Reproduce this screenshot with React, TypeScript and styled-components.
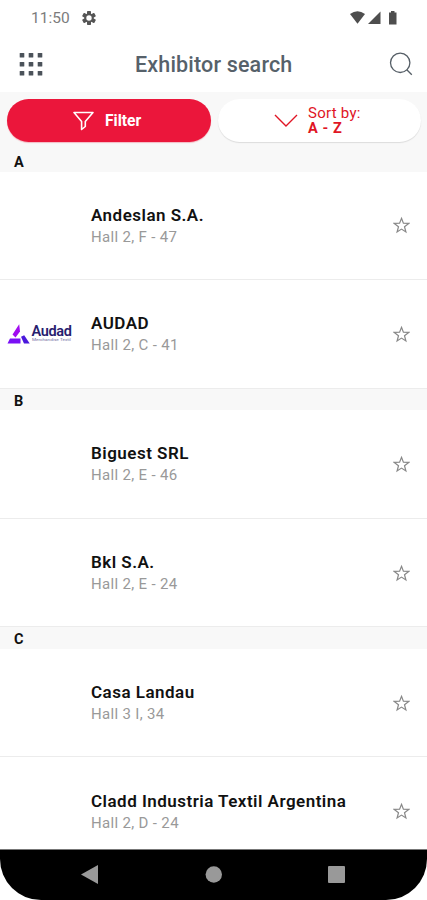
import React from "react";
import styled, { createGlobalStyle } from "styled-components";

const GlobalStyle = createGlobalStyle`
  * { box-sizing: border-box; }
  body { margin: 0; background: #fff; font-family: Roboto, "Liberation Sans", sans-serif; }
`;

const Screen = styled.div`
  width: 427px;
  height: 900px;
  display: flex;
  flex-direction: column;
  background: #fff;
  overflow: hidden;
`;

const StatusBar = styled.div`
  height: 36px;
  flex: none;
  display: flex;
  align-items: center;
  padding: 0 28px 0 31px;
`;

const Clock = styled.span`
  width: 51px;
  font-size: 15.5px;
  line-height: 18px;
  color: #7c7c7c;
`;

const StatusIcons = styled.div`
  margin-left: auto;
  display: flex;
`;

const AppBar = styled.header`
  height: 56px;
  flex: none;
  display: flex;
  align-items: center;
  padding: 0 14px 0 19px;
`;

const Title = styled.h1`
  flex: 1;
  margin: 2px 0 0 92px;
  font-size: 21.5px;
  font-weight: 500;
  line-height: 28px;
  letter-spacing: 0.17px;
  color: #56616a;
  white-space: nowrap;
`;

const Controls = styled.div`
  height: 61px;
  flex: none;
  display: flex;
  gap: 7px;
  padding: 6.5px 6px 11.5px 7px;
  background: #f8f8f8;
`;

const Pill = styled.button<{ $primary?: boolean }>`
  width: ${(p) => (p.$primary ? 204 : 203)}px;
  height: 43px;
  border: 0;
  border-radius: 22px;
  padding: 1px 0 0 ${(p) => (p.$primary ? 66 : 56)}px;
  display: flex;
  align-items: center;
  gap: ${(p) => (p.$primary ? 11 : 10)}px;
  font-family: inherit;
  text-align: left;
  color: ${(p) => (p.$primary ? "#fff" : "#e01525")};
  background: ${(p) => (p.$primary ? "#eb163b" : "#fff")};
  box-shadow: 0 1px 1px ${(p) => (p.$primary ? "#f3b9c2" : "#dcdcdc")};
`;

const FilterLabel = styled.span`
  font-size: 15.6px;
  line-height: 18px;
  font-weight: 700;
`;

const SortLabel = styled.span`
  display: flex;
  flex-direction: column;
`;

const SortCaption = styled.span`
  font-size: 15px;
  line-height: 15px;
  letter-spacing: 0.25px;
`;

const SortValue = styled.b`
  font-size: 14.5px;
  line-height: 15px;
  letter-spacing: 0.6px;
`;

const List = styled.main`
  flex: 1;
  min-height: 0;
  overflow: hidden;
`;

const SectionHead = styled.h2<{ $first?: boolean }>`
  margin: 0;
  height: ${(p) => (p.$first ? 18.5 : 21.5)}px;
  padding: ${(p) => (p.$first ? 1 : 4)}px 14px 0;
  font-size: 14.5px;
  line-height: 18px;
  font-weight: 700;
  color: #111;
  background: #f8f8f8;
`;

const Row = styled.article`
  height: 108.6px;
  display: flex;
  align-items: center;
  border-bottom: 1.5px solid #ececec;
  padding: 0 17px 0 7px;
`;

const LogoSlot = styled.div`
  width: 84px;
  height: 26px;
`;

const Details = styled.div`
  flex: 1;
  display: flex;
  flex-direction: column;
  padding-top: 2px;
  white-space: nowrap;
`;

const Name = styled.span`
  font-size: 17px;
  line-height: 20px;
  margin-bottom: 2px;
  font-weight: 600;
  letter-spacing: 0.48px;
  color: #111;
`;

const Place = styled.span`
  font-size: 15px;
  line-height: 21px;
  letter-spacing: 0.33px;
  color: #999;
`;

const NavBar = styled.nav`
  height: 51px;
  flex: none;
  display: flex;
  align-items: center;
  justify-content: space-between;
  padding: 0 82px 0 81px;
  background: #000;
  border-top: 1px solid #777;
  border-radius: 0 0 41px 41px;
`;

const GearIcon = () => (
  <svg width="14" height="14" viewBox="0 0 14 14">
    <g fill="#555">
      {[0, 60, 120].map((a) => (
        <rect key={a} x="5" y="0" width="4" height="14" rx=".7" transform={`rotate(${a} 7 7)`} />
      ))}
    </g>
    <circle cx="7" cy="7" r="3.7" fill="#fff" stroke="#555" strokeWidth="2" />
  </svg>
);

const SignalIcons = () => (
  <svg width="49" height="16" viewBox="0 0 49 16" fill="#4e4e4e">
    <path d="M0 4Q7.5-1.5 15 4L7.5 13.8Z" />
    <path d="M30.5 1.5V14H18Z" />
    <path d="M39 2.5h2V1h3.5v1.5h2v12H39z" />
  </svg>
);

const GridIcon = () => (
  <svg width="24" height="24" viewBox="0 0 24 24" fill="#4b525a">
    {[1, 10, 19].map((y) =>
      [0.7, 9.7, 18.7].map((x) => <rect key={`${x}-${y}`} x={x} y={y} width="4.6" height="4.6" rx=".6" />)
    )}
  </svg>
);

const SearchIcon = () => (
  <svg width="24" height="24" viewBox="0 0 24 24" fill="none" stroke="#555e66" strokeWidth="1.3">
    <circle cx="11.2" cy="10.8" r="9.7" />
    <path d="m17.8 17.8 5 5" />
  </svg>
);

const FunnelIcon = () => (
  <svg width="21" height="20" viewBox="0 0 21 20" fill="none" stroke="#fff" strokeWidth="1.6" strokeLinejoin="round">
    <path d="M1 1.5H20L12.3 10.5V15.5L8.6 18.5V10.5Z" />
  </svg>
);

const ChevronIcon = () => (
  <svg width="24" height="14" viewBox="0 0 24 14" fill="none" stroke="#e01525" strokeWidth="1.4">
    <path d="m1 1 11 11L23 1" />
  </svg>
);

const StarIcon = () => (
  <svg width="17" height="18" viewBox="0 0 17 18" fill="none" stroke="#888" strokeWidth="1.2">
    <path d="m8.5 2.3 1.9 4.8 5.3.3-4.2 3.3 1.4 5.3-4.4-2.9L4.1 16l1.4-5.3-4.2-3.3 5.3-.3z" />
  </svg>
);

const AudadLogo = () => (
  <svg width="66" height="26" viewBox="0 0 66 26">
    <path d="M12.2 3.2 13 10.5 8.5 16.5 5.5 13.5Z" fill="#a10cf0" />
    <path d="M3 17.5h10.5v5H.5Z" fill="#7a10f5" />
    <path d="m14 15.8 3.2-1.5 5.5 8.2H17Z" fill="#4a18dc" />
    <text x="24.5" y="15" fontFamily="Roboto, sans-serif" fontSize="14.5" fontWeight="600" fill="#27206e" textLength="40.5" lengthAdjust="spacing">Audad</text>
    <text x="25" y="20.2" fontFamily="Roboto, sans-serif" fontSize="3.6" fill="#7771a5" textLength="39" lengthAdjust="spacingAndGlyphs">Merchandise Textil</text>
  </svg>
);

interface Exhibitor {
  name: string;
  place: string;
  logo?: boolean;
}

const sections: { letter: string; items: Exhibitor[] }[] = [
  { letter: "A", items: [{ name: "Andeslan S.A.", place: "Hall 2, F - 47" }, { name: "AUDAD", place: "Hall 2, C - 41", logo: true }] },
  { letter: "B", items: [{ name: "Biguest SRL", place: "Hall 2, E - 46" }, { name: "Bkl S.A.", place: "Hall 2, E - 24" }] },
  { letter: "C", items: [{ name: "Casa Landau", place: "Hall 3 I, 34" }, { name: "Cladd Industria Textil Argentina", place: "Hall 2, D - 24" }] },
];

export default function App() {
  return (
    <Screen>
      <GlobalStyle />
      <StatusBar>
        <Clock>11:50</Clock>
        <GearIcon />
        <StatusIcons><SignalIcons /></StatusIcons>
      </StatusBar>
      <AppBar>
        <GridIcon />
        <Title>Exhibitor search</Title>
        <SearchIcon />
      </AppBar>
      <Controls>
        <Pill $primary>
          <FunnelIcon />
          <FilterLabel>Filter</FilterLabel>
        </Pill>
        <Pill>
          <ChevronIcon />
          <SortLabel>
            <SortCaption>Sort by:</SortCaption>
            <SortValue>A - Z</SortValue>
          </SortLabel>
        </Pill>
      </Controls>
      <List>
        {sections.map((s, i) => (
          <section key={s.letter}>
            <SectionHead $first={i === 0}>{s.letter}</SectionHead>
            {s.items.map((e) => (
              <Row key={e.name}>
                <LogoSlot>{e.logo && <AudadLogo />}</LogoSlot>
                <Details>
                  <Name>{e.name}</Name>
                  <Place>{e.place}</Place>
                </Details>
                <StarIcon />
              </Row>
            ))}
          </section>
        ))}
      </List>
      <NavBar>
        <svg width="17" height="20" viewBox="0 0 17 20" fill="#999"><path d="M0 9.5 17 0v19Z" /></svg>
        <svg width="17" height="18" viewBox="0 0 17 18" fill="#999"><circle cx="8.8" cy="8.5" r="8.2" /></svg>
        <svg width="17" height="18" viewBox="0 0 17 18" fill="#999"><rect width="17" height="17" rx="1" /></svg>
      </NavBar>
    </Screen>
  );
}
